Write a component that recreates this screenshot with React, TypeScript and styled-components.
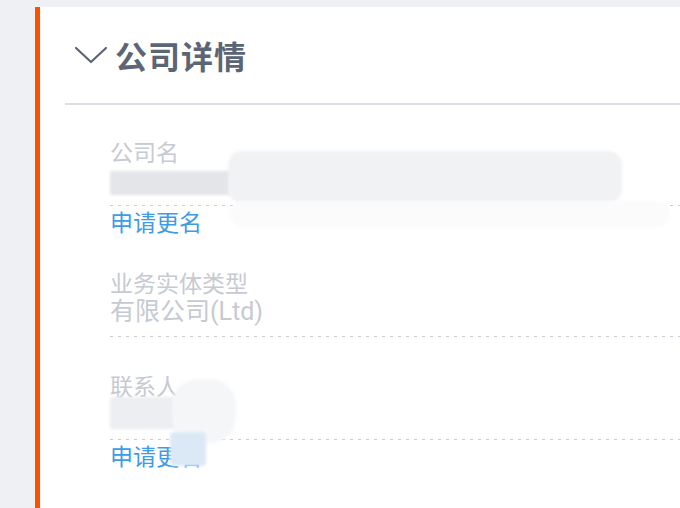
import React from 'react';
import styled, { createGlobalStyle } from 'styled-components';

const GlobalStyle = createGlobalStyle`
  html, body {
    margin: 0;
    padding: 0;
    background: #eef0f4;
    font-family: Roboto, "Noto Sans CJK SC", sans-serif;
  }
`;

const Page = styled.div`
  height: 508px;
  padding: 7px 0 0 35px;
  box-sizing: border-box;
  overflow: hidden;
`;

const Card = styled.section`
  height: 100%;
  background: #ffffff;
  border-left: 5px solid #ff5000;
`;

const Header = styled.div`
  height: 96px;
  display: flex;
  align-items: center;
  gap: 7px;
  padding-left: 34px;
`;

const Divider = styled.div`
  height: 2px;
  margin-left: 25px;
  background: #dcdfe5;
`;

const Title = styled.h2`
  margin: 0;
  font-family: "Noto Sans CJK SC", sans-serif;
  font-size: 32px;
  font-weight: 700;
  color: #5c6575;
  letter-spacing: 1px;
`;

const FieldList = styled.div`
  display: flex;
  flex-direction: column;
  gap: 33px;
  padding: 32px 0 0 70px;
`;

const Field = styled.div`
  display: flex;
  flex-direction: column;
`;

const Label = styled.div`
  font-family: "Noto Sans CJK SC", sans-serif;
  font-size: 23px;
  line-height: 28px;
  color: #c6cad1;
`;

const Value = styled.div`
  position: relative;
  height: 32px;
  padding-bottom: 9px;
  font-size: 25px;
  line-height: 32px;
  color: #c6cad1;
  border-bottom: 1px solid transparent;
  background-image: repeating-linear-gradient(
    to right,
    #c9cdd3 0,
    #c9cdd3 3px,
    transparent 3px,
    transparent 8px
  );
  background-size: 100% 1px;
  background-repeat: no-repeat;
  background-position: left bottom;
`;

const Link = styled.a`
  font-family: "Noto Sans CJK SC", sans-serif;
  font-size: 23px;
  line-height: 28px;
  color: #3d9ce3;
  text-decoration: none;
  cursor: pointer;
`;

// blurred patches that hide private data in the screenshot
const Redaction = styled.div<{ $x: number; $y: number; $w: number; $h: number; $tone: string; $radius?: number }>`
  position: absolute;
  left: ${p => p.$x}px;
  top: ${p => p.$y}px;
  width: ${p => p.$w}px;
  height: ${p => p.$h}px;
  background: ${p => p.$tone};
  border-radius: ${p => p.$radius ?? 2}px;
  filter: blur(1.5px);
`;

const Chevron = () => (
  <svg width="34" height="20" viewBox="0 0 34 20" fill="none">
    <polyline points="2,3 17,17 32,3" stroke="#5c6575" strokeWidth="2.2" strokeLinecap="round" strokeLinejoin="round" />
  </svg>
);

const App: React.FC = () => {
  return (
    <>
      <GlobalStyle />
      <Page>
        <Card>
          <Header>
            <Chevron />
            <Title>公司详情</Title>
          </Header>
          <Divider />

          <FieldList>
            <Field>
              <Label>公司名</Label>
              <Value>
                <Redaction $x={0} $y={6} $w={122} $h={24} $tone="#e4e5e9" />
                <Redaction $x={118} $y={-14} $w={394} $h={52} $tone="#f1f2f4" $radius={14} />
                <Redaction $x={120} $y={36} $w={440} $h={26} $tone="#fbfbfc" $radius={18} />
              </Value>
              <Link>申请更名</Link>
            </Field>

            <Field>
              <Label>业务实体类型</Label>
              <Value>有限公司(Ltd)</Value>
            </Field>

            <Field>
              <Label>联系人</Label>
              <Value>
                <Redaction $x={0} $y={-2} $w={120} $h={32} $tone="#eceef1" />
                <Redaction $x={62} $y={-20} $w={64} $h={64} $tone="#f5f6f8" $radius={26} />
                <Redaction $x={60} $y={33} $w={36} $h={34} $tone="#dbe9f6" $radius={4} />
              </Value>
              <Link>申请更名</Link>
            </Field>
          </FieldList>
        </Card>
      </Page>
    </>
  );
};

export default App;
